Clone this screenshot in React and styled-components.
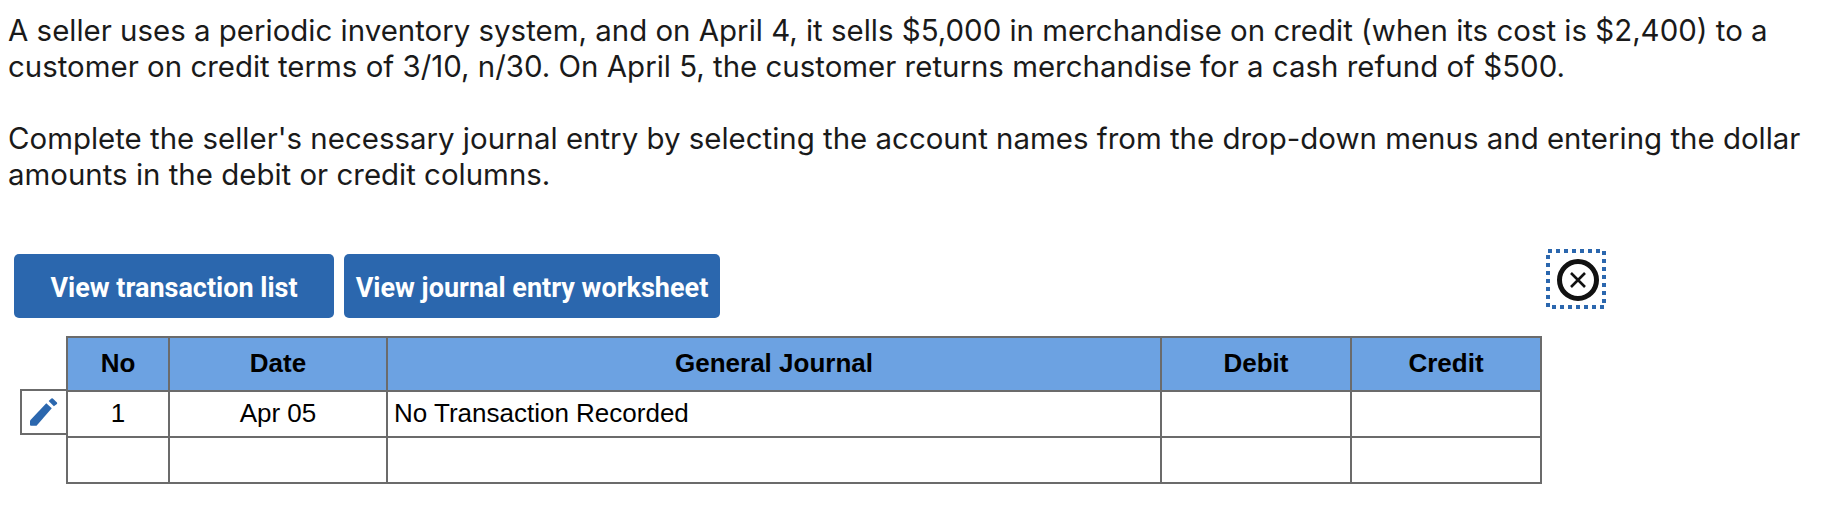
import React from 'react';
import styled, { createGlobalStyle } from 'styled-components';

const GlobalStyle = createGlobalStyle`
  html, body {
    margin: 0;
    padding: 0;
    background: #ffffff;
  }
`

const Page = styled.div`
  width: 1826px;
  height: 526px;
  overflow: hidden;
  box-sizing: border-box;
  padding-top: 12px;
`

const Question = styled.div`
  padding-left: 8px;
  width: 1815px;
  font-family: Inter, sans-serif;
  font-size: 29.45px;
  line-height: 36px;
  color: #1a1a1a;
`

const Paragraph = styled.p`
  margin: 0 0 35.5px 0;
  white-space: nowrap;
`

const Toolbar = styled.div`
  display: flex;
  align-items: flex-start;
  width: 1606px;
  margin-top: 62.5px;
  padding-left: 14px;
  box-sizing: border-box;
  gap: 10px;
`

const Button = styled.button`
  width: ${props => props.$width}px;
  height: 64px;
  border: none;
  padding: 3px 0 0 0;
  border-radius: 5px;
  background-color: #2b67ae;
  color: #ffffff;
  font-family: Roboto, sans-serif;
  font-size: 27px;
  font-weight: 700;
`

const CloseButton = styled.button`
  display: flex;
  margin: -5px 0 0 auto;
  width: 60px;
  height: 60px;
  padding: 0;
  border: none;
  background: none;
`

const Table = styled.table`
  border-collapse: collapse;
  table-layout: fixed;
  margin: 18px 0 0 66px;
  font-family: "Liberation Sans", Arial, sans-serif;
  font-size: 26px;
  color: #000000;
`

const Head = styled.th`
  width: ${props => props.$width}px;
  height: 50px;
  padding: 0 0 2px 0;
  border: 2px solid #6b6b6b;
  background-color: #6ca2e2;
  font-weight: 700;
  text-align: center;
`

const Cell = styled.td`
  position: relative;
  height: 42px;
  padding: 0 0 2px ${props => props.$left ? '6px' : '0'};
  border: 2px solid #6b6b6b;
  text-align: ${props => props.$left ? 'left' : 'center'};
`

const EditBox = styled.div`
  position: absolute;
  left: -48px;
  top: -3px;
  width: 46px;
  height: 46px;
  box-sizing: border-box;
  display: flex;
  align-items: center;
  justify-content: center;
  border: 2px solid #6b6b6b;
  border-right: none;
`

const PencilIcon = () => (
  <svg width="28" height="28" viewBox="0 0 27 27">
    <path d="M0 21.7 L15.7 5 L21 10 L6.3 26.7 L1 26.7 Q0 26.7 0 25.7 Z" fill="#2b67ae" />
    <path d="M18 3 L20.6 0.4 Q21.3 0 22 0.4 L26 4.3 Q26.4 5 26 5.7 L23 8 Z" fill="#2b67ae" />
  </svg>
)

const CloseIcon = () => (
  <svg width="60" height="60" viewBox="0 0 60 60">
    <rect x="2" y="2" width="56" height="56" fill="none" stroke="#2b67ae" strokeWidth="4" strokeDasharray="4 4" />
    <circle cx="32" cy="31" r="18.5" fill="#ffffff" stroke="#111111" strokeWidth="5" />
    <path d="M25 24 L39 38 M39 24 L25 38" stroke="#111111" strokeWidth="2.6" fill="none" />
  </svg>
)

const App = () => {
  return (
    <Page>
      <GlobalStyle />
      <Question>
        <Paragraph>
          A seller uses a periodic inventory system, and on April 4, it sells $5,000 in merchandise on credit (when its cost is $2,400) to a<br />
          customer on credit terms of 3/10, n/30. On April 5, the customer returns merchandise for a cash refund of $500.
        </Paragraph>
        <Paragraph>
          Complete the seller's necessary journal entry by selecting the account names from the drop-down menus and entering the dollar<br />
          amounts in the debit or credit columns.
        </Paragraph>
      </Question>
      <Toolbar>
        <Button $width={320}>View transaction list</Button>
        <Button $width={376}>View journal entry worksheet</Button>
        <CloseButton aria-label="Close"><CloseIcon /></CloseButton>
      </Toolbar>
      <Table>
        <thead>
          <tr>
            <Head $width={100}>No</Head>
            <Head $width={216}>Date</Head>
            <Head $width={772}>General Journal</Head>
            <Head $width={188}>Debit</Head>
            <Head $width={188}>Credit</Head>
          </tr>
        </thead>
        <tbody>
          <tr>
            <Cell>
              <EditBox><PencilIcon /></EditBox>
              1
            </Cell>
            <Cell>Apr 05</Cell>
            <Cell $left>No Transaction Recorded</Cell>
            <Cell />
            <Cell />
          </tr>
          <tr>
            <Cell />
            <Cell />
            <Cell />
            <Cell />
            <Cell />
          </tr>
        </tbody>
      </Table>
    </Page>
  );
}

export default App;
